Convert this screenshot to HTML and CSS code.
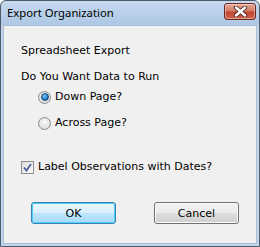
FILE: index.html
```html
<!DOCTYPE html>
<html lang="en">
<head>
    <meta charset="UTF-8">
    <title>Export Organization</title>
    <link rel="stylesheet" href="styles.css">
</head>
<body>
    <div class="window">
        <div class="titlebar">
            <span class="title">Export Organization</span>
            <button class="close" aria-label="Close">
                <svg width="15" height="11" viewBox="0 0 15 11">
                    <path d="M3 1.5 L12 9.5 M12 1.5 L3 9.5" stroke="#4a2a26" stroke-width="4.2" stroke-linecap="round"/>
                    <path d="M3 1.5 L12 9.5 M12 1.5 L3 9.5" stroke="#fff" stroke-width="2.4" stroke-linecap="round"/>
                </svg>
            </button>
        </div>
        <div class="client">
            <p class="label first">Spreadsheet Export</p>
            <p class="label">Do You Want Data to Run</p>
            <div class="options">
                <label class="option">
                    <span class="radio checked"></span>
                    <span>Down Page?</span>
                </label>
                <label class="option">
                    <span class="radio"></span>
                    <span>Across Page?</span>
                </label>
            </div>
            <label class="option check-row">
                <span class="checkbox">
                    <svg width="9" height="9" viewBox="0 0 9 9">
                        <path d="M1 4.5 L3.5 7.5 L8 1" fill="none" stroke="#4a5f97" stroke-width="1.8"/>
                    </svg>
                </span>
                <span>Label Observations with Dates?</span>
            </label>
            <div class="buttons">
                <button class="btn default">OK</button>
                <button class="btn">Cancel</button>
            </div>
        </div>
    </div>
</body>
</html>
```

FILE: styles.css
```css
body {
    margin: 0;
    background: #fff;
}
.window {
    width: 260px;
    height: 247px;
    box-sizing: border-box;
    border: 1px solid #4f5b69;
    border-radius: 6px 6px 0 0;
    padding: 0 2px 2px;
    background: linear-gradient(#c6daef, #adc7e4 24px, #c2d7ed 25px);
    display: flex;
    flex-direction: column;
}
.titlebar {
    height: 24px;
    display: flex;
    align-items: center;
    justify-content: space-between;
    padding: 0 1px 0 4px;
}
.title {
    font-family: "Noto Sans", sans-serif;
    font-size: 11.3px;
    color: #000;
    margin-top: -1px;
}
.close {
    width: 32px;
    height: 17px;
    margin-top: -3px;
    padding: 0;
    border: 1px solid #6b2b22;
    border-radius: 3px;
    background: linear-gradient(#e9a99a, #d47a67 45%, #c0432d 55%, #cf6a4f);
    box-shadow: inset 0 0 0 1px rgba(255, 255, 255, 0.35);
    display: flex;
    align-items: center;
    justify-content: center;
}
.client {
    flex: 1;
    background: #f0f0f0;
    border: 1px solid #a9bed6;
    padding: 0 0 0 17px;
    font-family: "DejaVu Sans", sans-serif;
    font-size: 11px;
    color: #000;
}
.label {
    margin: 0;
    height: 14px;
    line-height: 14px;
}
.label.first {
    margin-top: 18px;
    margin-bottom: 12px;
}
.options {
    padding-left: 17px;
    margin-top: 6px;
}
.option {
    display: flex;
    align-items: center;
    gap: 4px;
    height: 14px;
    line-height: 14px;
}
.options .option + .option {
    margin-top: 12px;
}
.radio {
    width: 11px;
    height: 11px;
    border: 1px solid #8a8a8a;
    border-radius: 50%;
    background: radial-gradient(circle at 50% 40%, #fafafa, #d4d4d4);
    display: flex;
    align-items: center;
    justify-content: center;
}
.radio.checked::after {
    content: "";
    width: 6px;
    height: 6px;
    border-radius: 50%;
    background: radial-gradient(circle at 40% 35%, #8fd0f8, #1a7ac8 60%, #0d4f8f);
    border: 0.5px solid #174a78;
}
.check-row {
    margin-top: 30px;
}
.checkbox {
    width: 11px;
    height: 11px;
    border: 1px solid #8e8f8f;
    background: linear-gradient(135deg, #dcdcdc, #fbfbfb);
    display: flex;
    align-items: center;
    justify-content: center;
}
.buttons {
    display: flex;
    gap: 38px;
    margin-top: 28px;
    padding-left: 10px;
}
.btn {
    width: 85px;
    height: 22px;
    padding: 0;
    font-family: "DejaVu Sans", sans-serif;
    font-size: 11px;
    color: #000;
    border: 1px solid #707070;
    border-radius: 3px;
    background: linear-gradient(#f2f2f2, #ebebeb 50%, #dddddd 51%, #cfcfcf);
    box-shadow: inset 0 0 0 1px #fcfcfc;
}
.btn.default {
    border-color: #3c7fb1;
    background: linear-gradient(#eaf6fd, #d9f0fc 50%, #bee6fd 51%, #a7d9f5);
    box-shadow: inset 0 0 0 1px #48d0fb;
}
```
